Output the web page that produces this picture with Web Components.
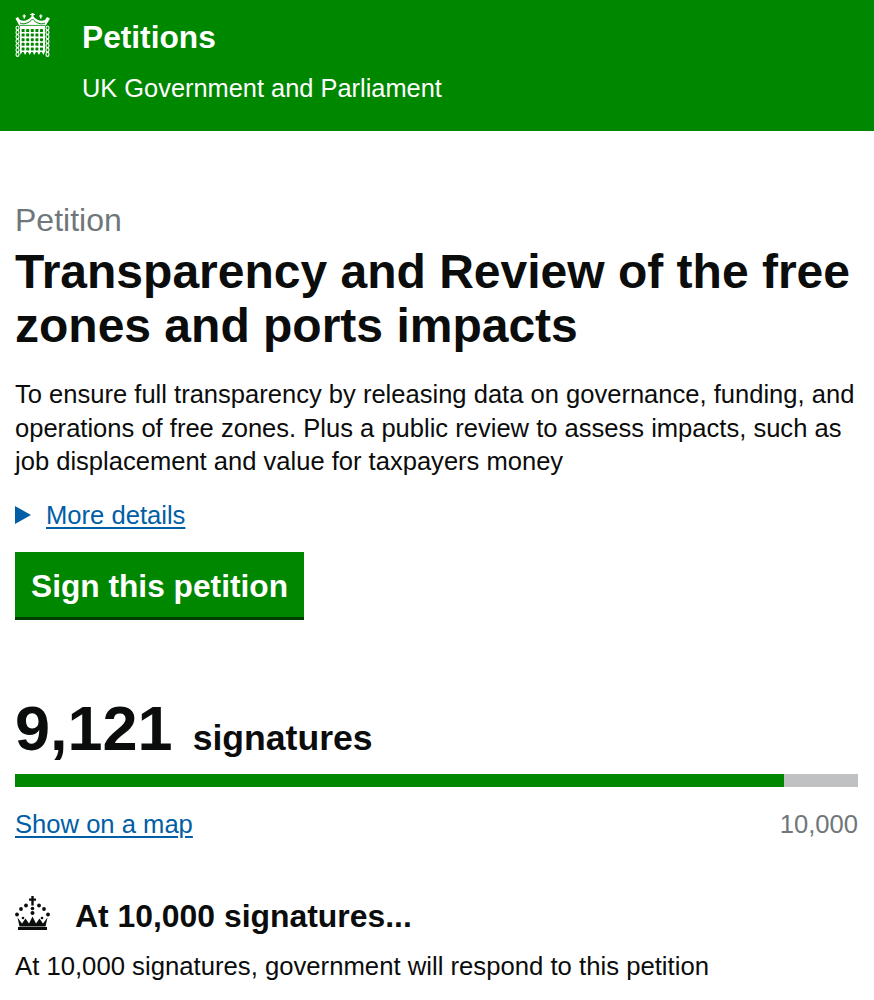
<!DOCTYPE html>
<html lang="en">
<head>
<meta charset="utf-8">
<title>Petitions</title>
<style>
  html, body { margin: 0; padding: 0; background: #fff; }
  body { font-family: "Liberation Sans", Arial, sans-serif; color: #0b0c0c; overflow: hidden; height: 1000px; }
</style>
</head>
<body>
<site-header></site-header>
<petition-page>
  <span slot="kicker">Petition</span>
  <span slot="title">Transparency and Review of the free zones and ports impacts</span>
  <span slot="summary">To ensure full transparency by releasing data on governance, funding, and operations of free zones. Plus a public review to assess impacts, such as job displacement and value for taxpayers money</span>
</petition-page>
<signature-count count="9,121" percent="91.2" goal="10,000"></signature-count>
<threshold-note heading="At 10,000 signatures..." text="At 10,000 signatures, government will respond to this petition"></threshold-note>

<script>
class siteHeader extends HTMLElement {

  constructor() {
    super();
    this.attachShadow({ mode: 'open' });
  }

  connectedCallback() {
    // portcullis: 5 x 5 holes, one spike under each bar
    const holes = [];
    for (let row = 0; row < 5; row++) {
      for (let col = 0; col < 5; col++) {
        holes.push(`<rect x="${21.6 + col * 4.6}" y="${29 + row * 4.6}" width="3" height="3" rx=".6"/>`);
      }
    }
    let spikes = 'M20 26H45V51.500';
    for (let i = 5; i > 0; i--) {
      const x = 20 + i * 4.6 + .5;
      spikes += `L${x} 55L${x - 1.6} 52L${x - 3} 52`;
    }
    spikes += 'L20.500 55L20 51.500Z';
    const links = [];
    for (let y = 28; y < 55; y += 4.4) {
      links.push(`<ellipse cx="17.500" cy="${y}" rx="1.500" ry="2"/><ellipse cx="47.500" cy="${y}" rx="1.500" ry="2"/>`);
    }

    this.shadowRoot.innerHTML = `
      <style>
        :host { display: block; background: #008700; color: #fff; height: 131px; }
        .bar { display: flex; padding: 13px 0 0 15px; gap: 31px; }
        svg { width: 36px; height: 44px; flex: none; }
        .names { display: flex; flex-direction: column; gap: 15px; padding-top: 3px; }
        b { font-size: 31.700px; line-height: 42px; }
        span { font-size: 25.400px; line-height: 30px; }
      </style>
      <div class="bar">
        <svg viewBox="15 13 36 44" aria-hidden="true">
          <g fill="none" stroke="#fff" stroke-width="1.100">${links.join('')}</g>
          <path fill="#fff" d="${spikes}"/>
          <g fill="#008700">${holes.join('')}</g>
          <path fill="#fff" d="M19.500 26L15.500 18.500L18 17L20 20C24 22 29 20 31.500 16.500V15H30V14H31.500V13H33.500V14H35V15H33.500V16.500C36 20 41 22 45 20L47 17L50 18.500L45.500 26Z"/>
          <path fill="#fff" d="M23.500 18.500V16.500H22.500V15.500H23.500V14.500H25V15.500H26V16.500H25V18.500ZM40 18.500V16.500H39V15.500H40V14.500H41.500V15.500H42.500V16.500H41.500V18.500Z"/>
          <path fill="none" stroke="#008700" stroke-width="1" d="M20 23C24 25 29 23 32.500 19C36 23 41 25 45 23"/>
          <path fill="none" stroke="#008700" stroke-width=".8" d="M19.500 25.400H45.500"/>
        </svg>
        <div class="names">
          <b>Petitions</b>
          <span>UK Government and Parliament</span>
        </div>
      </div>
    `;
  }
}

class petitionPage extends HTMLElement {

  constructor() {
    super();
    this.attachShadow({ mode: 'open' });
  }

  connectedCallback() {
    this.shadowRoot.innerHTML = `
      <style>
        :host { display: block; padding: 71px 15px 0; }
        .kicker { color: #6f777b; font-size: 32px; line-height: 36px; margin-bottom: 7px; }
        h1 { margin: 0 0 25px; font-size: 48px; line-height: 54px; font-weight: 700; }
        .summary { margin: 0; font-size: 25.550px; line-height: 33.500px; }
        .more { display: flex; align-items: center; gap: 15px; margin-top: 19px; height: 34px; }
        .arrow { width: 0; height: 0; border-style: solid; border-width: 9px 0 9px 16px; border-color: transparent transparent transparent #005ea5; }
        a { color: #005ea5; font-size: 25.600px; line-height: 34px; text-decoration: underline; text-underline-offset: 3px; }
        .sign { box-sizing: border-box; display: inline-block; margin-top: 20px; padding: 4px 16px 0; height: 68px; background: #008700; color: #fff; font: 700 31.700px/60px "Liberation Sans", Arial, sans-serif; border: 0; border-bottom: 3px solid #003f00; }
      </style>
      <div class="kicker"><slot name="kicker"></slot></div>
      <h1><slot name="title"></slot></h1>
      <p class="summary"><slot name="summary"></slot></p>
      <div class="more"><span class="arrow"></span><a href="#">More details</a></div>
      <button class="sign">Sign this petition</button>
    `;
  }
}

class signatureCount extends HTMLElement {

  constructor() {
    super();
    this.attachShadow({ mode: 'open' });
  }

  connectedCallback() {
    this.shadowRoot.innerHTML = `
      <style>
        :host { display: block; padding: 68px 16px 0 15px; }
        .count { display: flex; align-items: baseline; gap: 20px; height: 84px; }
        .count b { font-size: 63px; line-height: 80px; }
        .count span { font-size: 35.600px; font-weight: 700; }
        .track { height: 13px; background: #bfc1c3; margin-top: 2px; }
        .fill { height: 100%; background: #008700; }
        .below { display: flex; justify-content: space-between; margin-top: 20px; font-size: 25.600px; line-height: 34px; }
        a { color: #005ea5; text-decoration: underline; text-underline-offset: 3px; }
        .goal { color: #6f777b; }
      </style>
      <div class="count"><b>${this.getAttribute('count')}</b><span>signatures</span></div>
      <div class="track"><div class="fill" style="width:${this.getAttribute('percent')}%"></div></div>
      <div class="below"><a href="#">Show on a map</a><span class="goal">${this.getAttribute('goal')}</span></div>
    `;
  }
}

class thresholdNote extends HTMLElement {

  constructor() {
    super();
    this.attachShadow({ mode: 'open' });
  }

  connectedCallback() {
    const dots = [[32.5, 907.5, 1.8], [26, 904.5, 1.9], [39, 904.5, 1.9], [21, 908, 1.9], [44, 908, 1.9], [17, 913.5, 1.9], [48, 913.5, 1.9], [32.5, 912, 2], [23, 917, 1.3], [42, 917, 1.3]];
    this.shadowRoot.innerHTML = `
      <style>
        :host { display: block; padding: 56px 15px 0; }
        .head { display: flex; align-items: flex-start; gap: 24px; height: 40px; }
        svg { width: 36px; height: 36px; flex: none; margin-top: -1px; }
        h2 { margin: 0; font-size: 31.900px; line-height: 38px; font-weight: 700; }
        p { margin: 12px 0 0; font-size: 25.700px; line-height: 34px; }
      </style>
      <div class="head">
        <svg viewBox="15 895 36 36" aria-hidden="true">
          <g fill="#0b0c0c">
            <path d="M31.300 895H33.700V897.500H36V899.700H33.700V904.500H31.300V899.700H29V897.500H31.300Z"/>
            ${dots.map(d => `<circle cx="${d[0]}" cy="${d[1]}" r="${d[2]}"/>`).join('')}
            <path d="M17.500 916.500L22 922.500L25.500 917.500L29 922.500L32.500 915.500L36 922.500L39.500 917.500L43 922.500L47.500 916.500L45.500 925.500H19.500Z"/>
            <rect x="18" y="926" width="29" height="3"/>
          </g>
        </svg>
        <h2>${this.getAttribute('heading')}</h2>
      </div>
      <p>${this.getAttribute('text')}</p>
    `;
  }
}

customElements.define('site-header', siteHeader);
customElements.define('petition-page', petitionPage);
customElements.define('signature-count', signatureCount);
customElements.define('threshold-note', thresholdNote);
</script>
</body>
</html>
